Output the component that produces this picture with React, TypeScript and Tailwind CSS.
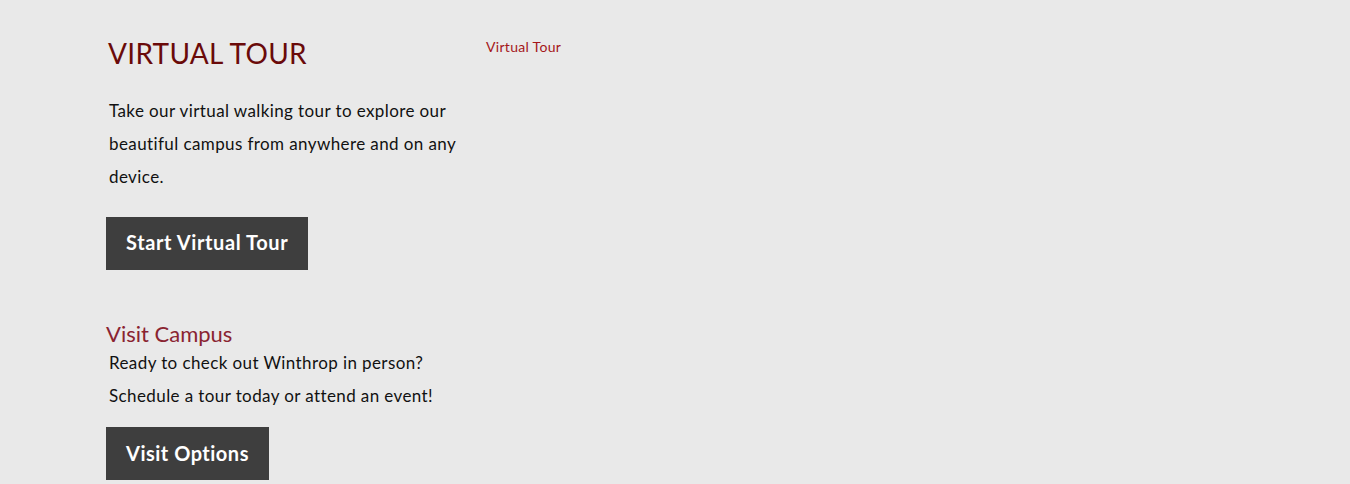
export default function App() {
  return (
    <div className="min-h-[484px] w-full bg-[#e9e9e9] font-['Lato','Liberation_Sans',sans-serif]">
      <div className="flex pl-[106px] pt-[36px]">
        <div className="w-[380px] shrink-0">
          <h1 className="ml-[2px] text-[28px] leading-[34px] tracking-[0.3px] text-[#6a0a0a]">VIRTUAL TOUR</h1>
          <p className="mt-[24px] pl-[3px] text-[17px] leading-[33px] tracking-[0.4px] text-[#111]">
            Take our virtual walking tour to explore our beautiful campus from anywhere and on any device.
          </p>
          <button className="mt-[24px] h-[53px] bg-[#3e3e3e] px-[20px] pb-[3px] text-[20px] font-bold tracking-[0.6px] text-white">
            Start Virtual Tour
          </button>
          <h2 className="mt-[52px] text-[22px] leading-[24px] text-[#8a2431]">Visit Campus</h2>
          <p className="pl-[3px] text-[17px] leading-[33px] tracking-[0.4px] text-[#111]">
            Ready to check out Winthrop in person?
            <br />
            Schedule a tour today or attend an event!
          </p>
          <button className="mt-[15px] h-[53px] bg-[#3e3e3e] px-[20px] pb-[2px] text-[20px] font-bold tracking-[0.5px] text-white">
            Visit Options
          </button>
        </div>
        <div className="-mt-[2px]">
          <span className="text-[14px] tracking-[0.3px] text-[#a4161a]">Virtual Tour</span>
        </div>
      </div>
    </div>
  );
}
